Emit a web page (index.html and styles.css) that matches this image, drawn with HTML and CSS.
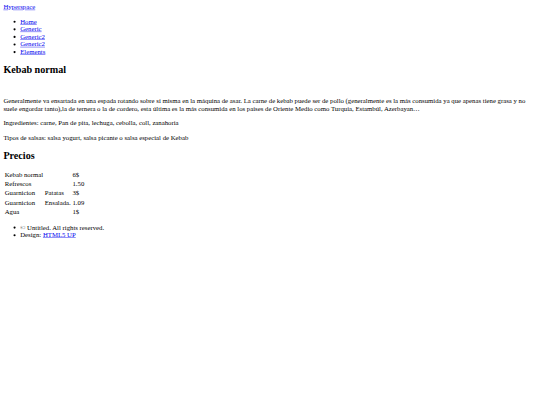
FILE: index.html
```html
<!DOCTYPE html>
<html lang="es" class="page">
<head>
<meta charset="utf-8">
<title>Kebab normal</title>
<link rel="stylesheet" href="styles.css">
</head>
<body class="doc">
<div class="canvas">
<header class="header"><a href="#" class="title">Hyperspace</a>
<nav class="nav"><ul class="nav-list">
<li><a href="#">Home</a></li>
<li><a href="#">Generic</a></li>
<li><a href="#">Generic2</a></li>
<li><a href="#">Generic2</a></li>
<li><a href="#">Elements</a></li>
</ul></nav>
</header>
<main class="main">
<h2 class="heading">Kebab normal</h2>
<div class="image-slot"></div>
<p class="text">Generalmente va ensartada en una espada rotando sobre sí misma en la máquina de asar. La carne de kebab puede ser de pollo (generalmente es la más consumida ya que apenas tiene grasa y no suele engordar tanto),la de ternera o la de cordero, esta última es la más consumida en los países de Oriente Medio como Turquía, Estambúl, Azerbayan…</p>
<p class="text">Ingredientes: carne, Pan de pita, lechuga, cebolla, coll, zanahoria</p>
<p class="text">Tipos de salsas: salsa yogurt, salsa picante o salsa especial de Kebab</p>
<h2 class="heading">Precios</h2>
<table class="prices">
<tr><td>Kebab normal</td><td></td><td>6$</td></tr>
<tr><td>Refrescos</td><td></td><td>1.50</td></tr>
<tr><td>Guarnicion</td><td>Patatas</td><td>3$</td></tr>
<tr><td>Guarnicion</td><td>Ensalada.</td><td>1.09</td></tr>
<tr><td>Agua</td><td></td><td>1$</td></tr>
</table>
</main>
<footer class="footer"><ul class="footer-list">
<li>© Untitled. All rights reserved.</li>
<li>Design: <a href="#">HTML5 UP</a></li>
</ul></footer>
</div>
</body>
</html>
```
FILE: styles.css
```css
.page {
  overflow: hidden;
  background: #fff;
}
.doc {
  margin: 0;
  width: 540px;
  height: 405px;
  overflow: hidden;
  font-family: "Liberation Serif", "Times New Roman", serif;
  font-size: 16px;
  color: #000;
}
.canvas {
  box-sizing: border-box;
  width: 1280px;
  height: 960px;
  padding: 8px;
  overflow: hidden;
  transform: scale(0.421875);
  transform-origin: 0 0;
}
.heading {
  font-size: 24px;
  font-weight: bold;
}
.image-slot {
  height: 16px;
}
.prices td {
  padding: 1px;
}
```
